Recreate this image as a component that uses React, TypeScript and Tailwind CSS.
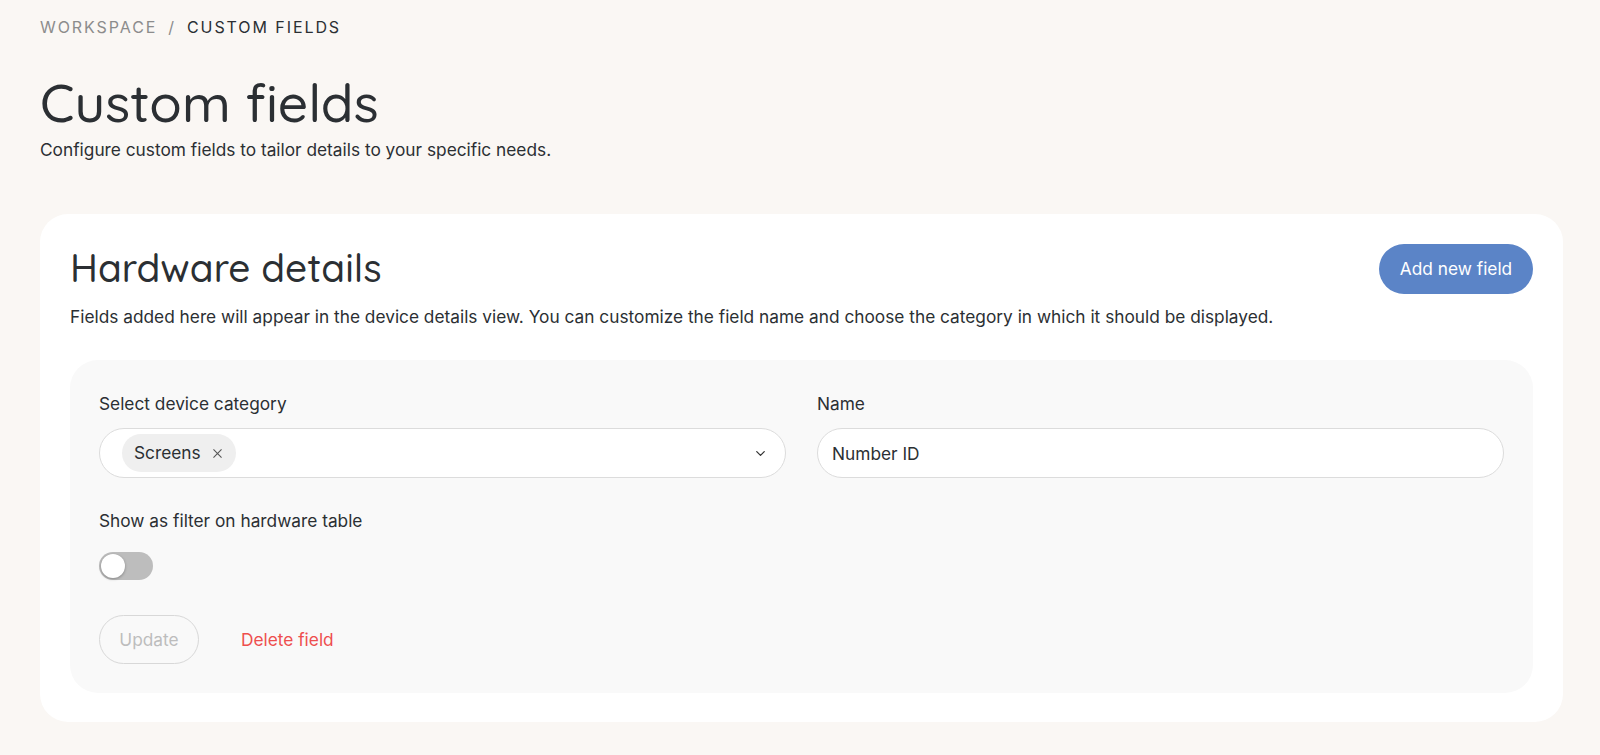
import React, { useState } from 'react';

const headingFont = { fontFamily: '"Quicksand", "Lato", "Noto Sans", sans-serif' };

const ChevronDown: React.FC = () => (
  <svg width="15" height="15" viewBox="0 0 24 24" fill="none" stroke="#333" strokeWidth="2" strokeLinecap="round" strokeLinejoin="round">
    <path d="M6 9l6 6 6-6" />
  </svg>
);

const XIcon: React.FC = () => (
  <svg width="13" height="13" viewBox="0 0 24 24" fill="none" stroke="#555" strokeWidth="2" strokeLinecap="round">
    <path d="M5 5l14 14M19 5L5 19" />
  </svg>
);

const App: React.FC = () => {
  const [showFilter, setShowFilter] = useState(false);
  const [name, setName] = useState('Number ID');

  return (
    <div className="min-h-screen bg-[#faf7f4] text-[#2b2f33] font-['Inter',sans-serif] pl-[40px] pr-[37px] pt-[17px] pb-[40px]">
      <div className="flex items-center gap-[11px] text-[16px] tracking-[0.12em] leading-[20px]">
        <span className="text-[#8c8c8c]">WORKSPACE</span>
        <span className="text-[#8c8c8c]">/</span>
        <span className="text-[#2b2f33]">CUSTOM FIELDS</span>
      </div>

      <h1 className="mt-[35px] text-[53.3px] leading-[60px] font-medium text-[#2b2f33]" style={headingFont}>
        Custom fields
      </h1>
      <p className="mt-[5px] text-[17.3px] leading-[26px] text-[#2b2f33]">
        Configure custom fields to tailor details to your specific needs.
      </p>

      <div className="mt-[51px] bg-white rounded-[28px] px-[30px] pt-[30px] pb-[29px]">
        <div className="flex justify-between items-start">
          <div>
            <h2 className="text-[38.8px] leading-[48px] font-medium" style={headingFont}>
              Hardware details
            </h2>
            <p className="mt-[12px] text-[17.3px] leading-[26px] text-[#2b2f33]">
              Fields added here will appear in the device details view. You can customize the field name and choose the category in which it should be displayed.
            </p>
          </div>
          <button className="h-[50px] w-[154px] rounded-full bg-[#5b84c7] text-white text-[17.3px] shrink-0">
            Add new field
          </button>
        </div>

        <div className="mt-[30px] bg-[#f9f9f9] rounded-[28px] px-[29px] pt-[32px] pb-[29px]">
          <div className="grid grid-cols-2 gap-[31px]">
            <div>
              <label className="block text-[17.3px] leading-[24px] text-[#2b2f33]">Select device category</label>
              <div className="mt-[12px] h-[50px] rounded-full border border-[#dcdcdc] bg-white flex items-center pl-[22px] pr-[17px]">
                <span className="h-[38px] px-[12px] rounded-full bg-[#efefef] flex items-center gap-[10px] text-[17.3px]">
                  Screens
                  <XIcon />
                </span>
                <span className="ml-auto flex items-center">
                  <ChevronDown />
                </span>
              </div>
            </div>
            <div>
              <label className="block text-[17.3px] leading-[24px] text-[#2b2f33]">Name</label>
              <input
                value={name}
                onChange={(e) => setName(e.target.value)}
                className="mt-[12px] w-full h-[50px] rounded-full border border-[#dcdcdc] bg-white px-[14px] text-[17.3px] text-[#2b2f33] outline-none"
              />
            </div>
          </div>

          <div className="mt-[31px] text-[17.3px] leading-[24px]">Show as filter on hardware table</div>
          <button
            onClick={() => setShowFilter(!showFilter)}
            className={`mt-[19px] w-[54px] h-[28px] rounded-full flex items-center px-[2px] ${showFilter ? 'bg-[#5b84c7] justify-end' : 'bg-[#bdbdbd] justify-start'}`}
          >
            <span className="w-[24px] h-[24px] rounded-full bg-white shadow-[0_1px_3px_rgba(0,0,0,0.3)]" />
          </button>

          <div className="mt-[35px] flex items-center gap-[42px]">
            <button className="h-[49px] w-[100px] rounded-full border border-[#d8d8d8] text-[17.3px] text-[#bdbdbd]" disabled>
              Update
            </button>
            <button className="text-[17.3px] text-[#ee4e4e]">Delete field</button>
          </div>
        </div>
      </div>
    </div>
  );
};

export default App;
